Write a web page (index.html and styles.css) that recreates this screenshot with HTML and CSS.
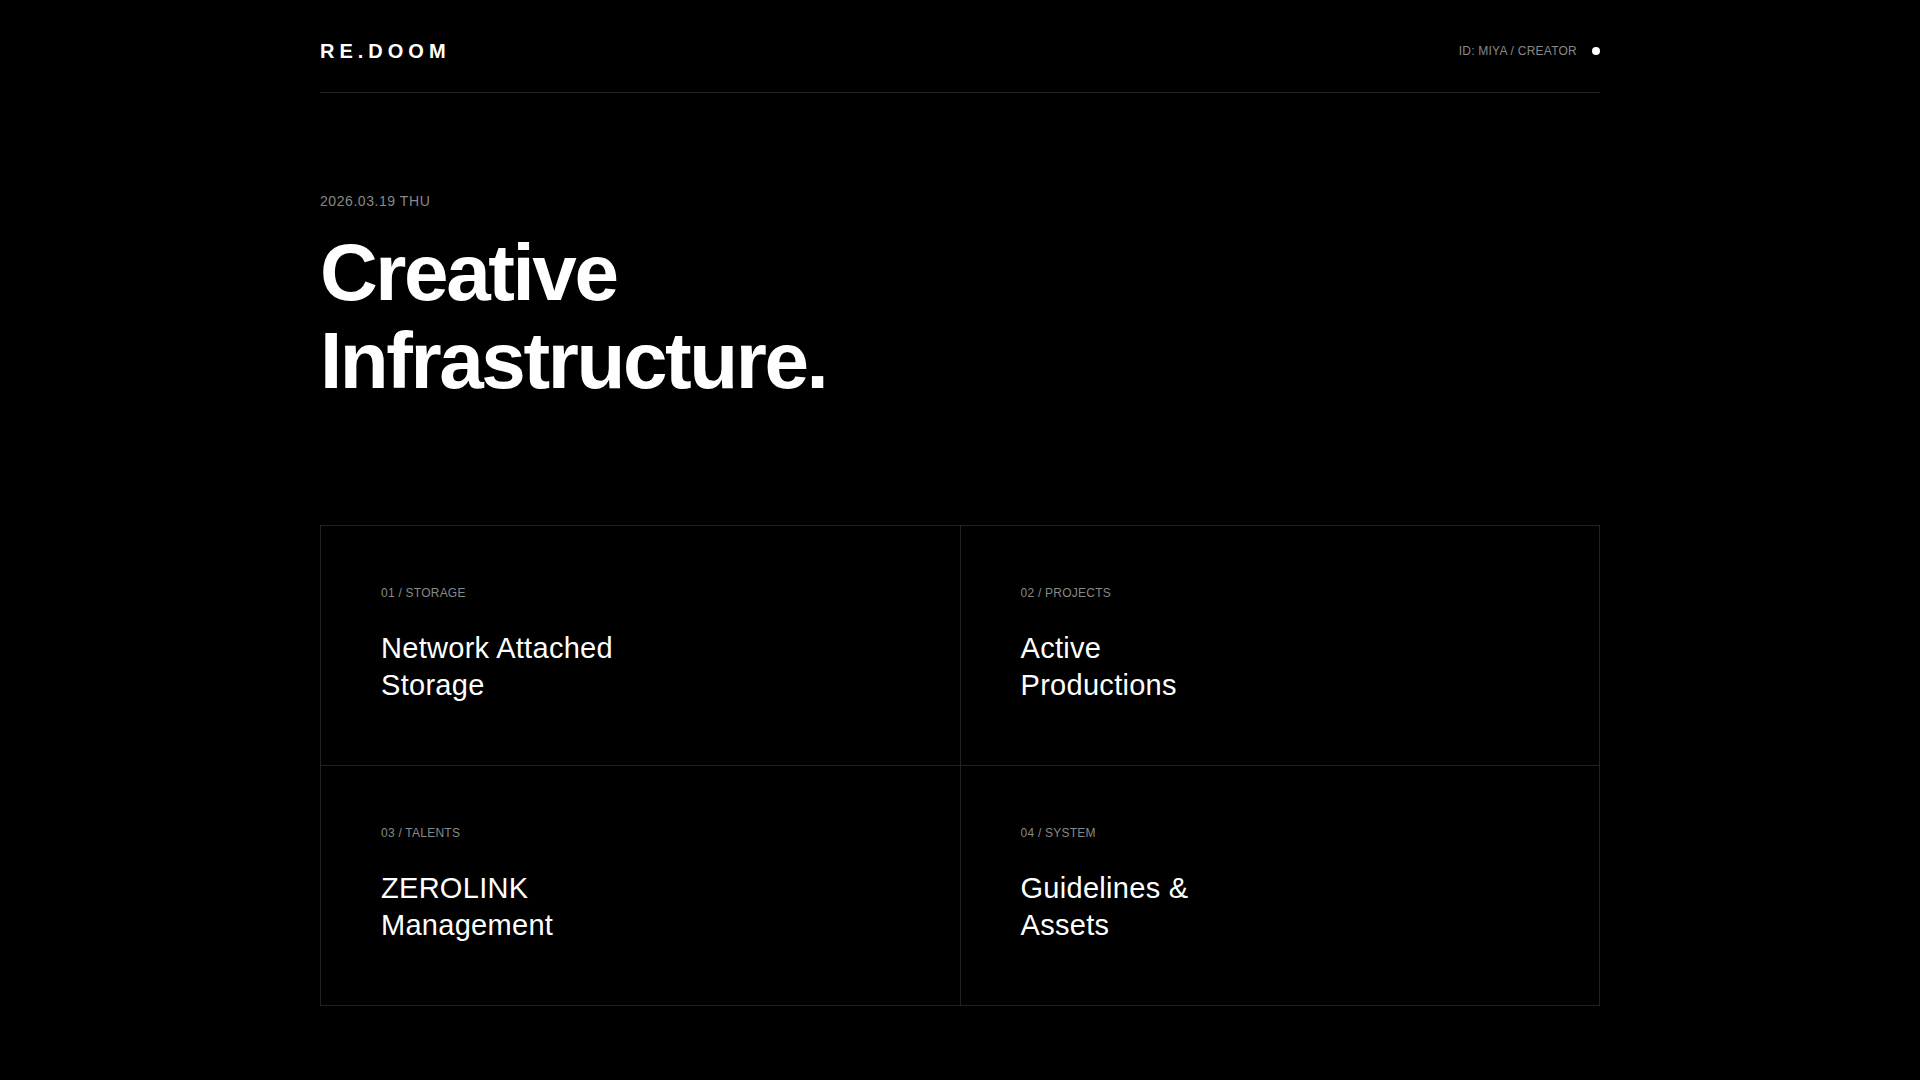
FILE: index.html
```html
<!DOCTYPE html>
<html lang="en">
<head>
    <meta charset="UTF-8">
    <meta name="viewport" content="width=device-width, initial-scale=1.0">
    <title>RE.DOOM — Creative Infrastructure</title>
    <link rel="stylesheet" href="styles.css">
</head>
<body>
    <div class="page">
        <header class="topbar">
            <div class="logo">RE.DOOM</div>
            <div class="user">
                <span class="user-id">ID: MIYA / CREATOR</span>
                <span class="status-dot"></span>
            </div>
        </header>

        <section class="hero">
            <p class="date">2026.03.19 THU</p>
            <h1 class="headline">Creative<br>Infrastructure.</h1>
        </section>

        <nav class="grid">
            <a class="cell" href="#storage">
                <span class="cell-label">01 / STORAGE</span>
                <h2 class="cell-title">Network Attached<br>Storage</h2>
            </a>
            <a class="cell" href="#projects">
                <span class="cell-label">02 / PROJECTS</span>
                <h2 class="cell-title">Active<br>Productions</h2>
            </a>
            <a class="cell" href="#talents">
                <span class="cell-label">03 / TALENTS</span>
                <h2 class="cell-title">ZEROLINK<br>Management</h2>
            </a>
            <a class="cell" href="#system">
                <span class="cell-label">04 / SYSTEM</span>
                <h2 class="cell-title">Guidelines &amp;<br>Assets</h2>
            </a>
        </nav>
    </div>
</body>
</html>
```

FILE: styles.css
```css
body {
    margin: 0;
    background: #000;
    color: #fff;
    font-family: "Liberation Sans", Arial, sans-serif;
}
.page {
    max-width: 1280px;
    margin: 0 auto;
}

/* top bar */
.topbar {
    display: flex;
    justify-content: space-between;
    align-items: center;
    padding: 40px 0 29px;
    border-bottom: 1px solid #222;
}
.logo {
    font-size: 20px;
    font-weight: bold;
    letter-spacing: 0.25em;
}
.user {
    display: flex;
    align-items: center;
    gap: 15px;
    margin-top: -1px;
}
.user-id {
    font-size: 12px;
    color: #888;
    letter-spacing: 0.02em;
}
.status-dot {
    width: 8px;
    height: 8px;
    border-radius: 50%;
    background: #fff;
}

/* hero */
.hero {
    padding: 100px 0 120px;
}
.date {
    margin: 0 0 20px;
    font-size: 14px;
    color: #888;
    letter-spacing: 0.04em;
}
.headline {
    margin: 0;
    font-size: 80px;
    font-weight: bold;
    line-height: 1.1;
    letter-spacing: -0.03em;
}

/* section grid */
.grid {
    display: grid;
    grid-template-columns: 1fr 1fr;
    grid-auto-rows: 239px;
    gap: 1px;
    background: #222;
    border: 1px solid #222;
}
.cell {
    display: block;
    background: #000;
    color: #fff;
    text-decoration: none;
    padding: 60px;
}
.cell-label {
    display: block;
    font-size: 12px;
    color: #888;
    letter-spacing: 0.02em;
}
.cell-title {
    margin: 30px 0 0;
    font-size: 29px;
    font-weight: normal;
    line-height: 1.27;
    letter-spacing: 0.01em;
}
```
